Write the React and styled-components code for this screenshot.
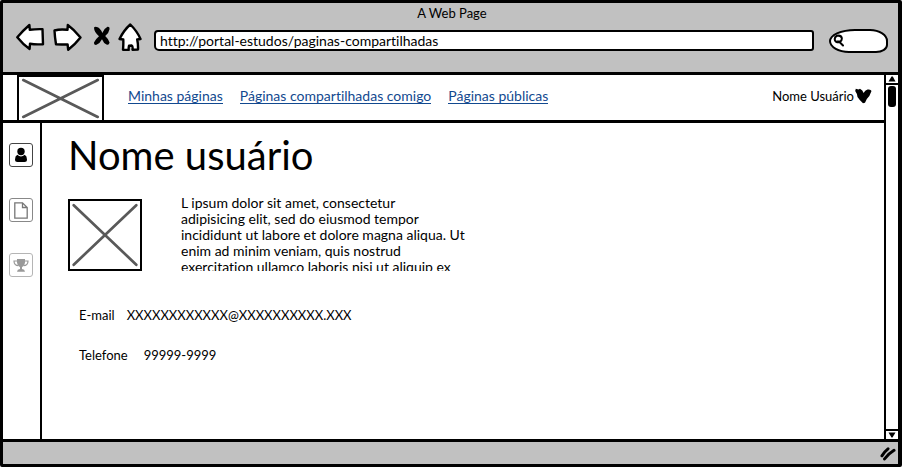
import React from "react";
import styled, { createGlobalStyle } from "styled-components";

const INK = "#000";
const CHROME = "#c1c1c1";
const LINK = "#12498f";

const GlobalStyle = createGlobalStyle`
  *, *::before, *::after { box-sizing: border-box; }
  body { margin: 0; background: #fff; color: ${INK}; font-variant-ligatures: none; }
  body, button, input { font-family: Lato, "Liberation Sans", sans-serif; font-size: 13px; line-height: 16px; }
  h1, p, dl, dd { margin: 0; }
  svg { display: block; }
`;

const BrowserFrame = styled.div`
  display: flex;
  flex-direction: column;
  min-height: 100vh;
  border: 3px solid ${INK};
  border-right-width: 4px;
  border-radius: 2px;
`;

const ChromeHeader = styled.header`
  background: ${CHROME};
  border-bottom: 3px solid ${INK};
  padding: 2px 10px 20px 13px;
`;

const WindowTitle = styled.div`
  text-align: center;
`;

const Toolbar = styled.div`
  display: flex;
  align-items: center;
  gap: 8px;
  height: 31px;
`;

const PlainButton = styled.button`
  display: flex;
  align-items: center;
  justify-content: center;
  flex: none;
  padding: 0;
  border: 0;
  background: none;
  color: inherit;
  cursor: pointer;
`;

const AddressInput = styled.input`
  flex: 1;
  min-width: 0;
  height: 21px;
  margin: 8px 7px 0 4px;
  padding: 0 4px;
  font-size: 14px;
  color: ${INK};
  background: #fff;
  border: 2px solid ${INK};
  border-radius: 4px 3px 3px 5px;
  font-variant-ligatures: none;
`;

const SearchBox = styled.label`
  display: flex;
  align-items: center;
  gap: 2px;
  width: 59px;
  height: 24px;
  margin-top: 8px;
  padding: 0 6px 0 2px;
  background: #fff;
  border: 2px solid ${INK};
  border-radius: 26px 18px 12px 20px / 12px 12px 8px 12px;
`;

const SearchInput = styled.input`
  flex: 1;
  min-width: 0;
  padding: 0;
  border: 0;
  outline: 0;
  background: transparent;
`;

const Viewport = styled.div`
  display: flex;
  flex: 1;
`;

const Page = styled.div`
  display: flex;
  flex: 1;
  flex-direction: column;
  min-width: 0;
`;

const SiteNav = styled.nav`
  display: flex;
  align-items: center;
  padding: 0 12px 0 14px;
  border-bottom: 3px solid ${INK};
`;

const ImagePlaceholder = styled.div`
  flex: none;
  width: ${(p) => p.$width}px;
  height: ${(p) => p.$height}px;
  padding: 1px;
  border: 2px solid ${INK};
  border-bottom-width: ${(p) => (p.$open ? 0 : 2)}px;
`;

const NavLinks = styled.div`
  display: flex;
  flex: 1;
  gap: 17px;
  margin: 0 0 3px 24px;
`;

const NavLink = styled.a`
  color: ${LINK};
  font-size: 14px;
  line-height: 15px;
  text-decoration: none;
  border-bottom: 1px solid ${LINK};
`;

const UserMenu = styled(PlainButton)`
  gap: 1px;
  margin-bottom: 3px;
`;

const Body = styled.div`
  display: flex;
  flex: 1;
`;

const Sidebar = styled.aside`
  display: flex;
  flex-direction: column;
  align-items: center;
  gap: 31px;
  width: 39px;
  padding: 20px 1px 20px 0;
  border-right: 2px solid ${INK};
`;

const SideButton = styled(PlainButton)`
  width: 24px;
  height: 24px;
  color: ${(p) => p.$tone};
  border: 1px solid ${(p) => p.$edge};
  border-radius: 3px;
`;

const Main = styled.main`
  flex: 1;
  min-width: 0;
  padding: 10px 26px;
`;

const Heading = styled.h1`
  font-size: 40px;
  line-height: 44px;
  font-weight: 400;
`;

const Profile = styled.section`
  display: flex;
  gap: 39px;
  margin-top: 18px;
`;

const ProfileImage = styled.div`
  padding-top: 4px;
`;

const Bio = styled.p`
  max-width: 288px;
  height: 76px;
  overflow: hidden;
  font-size: 14px;
`;

const Details = styled.dl`
  display: grid;
  gap: 24px;
  margin: 36px 0 0 11px;
`;

const Detail = styled.div`
  display: flex;
  gap: ${(p) => p.$gap}px;
`;

const Scrollbar = styled.div`
  display: flex;
  flex-direction: column;
  width: 14px;
  border-left: 2px solid ${INK};
`;

const ScrollButton = styled(PlainButton)`
  height: 10px;
  border: solid ${INK};
  border-width: ${(p) => (p.$end ? "2px 0 0" : "0 0 2px")};
`;

const Track = styled.div`
  flex: 1;
  padding: 1px 1px 1px 2px;
`;

const Thumb = styled.div`
  height: 21px;
  width: 8px;
  border-radius: 3px;
  background: ${INK};
`;

const StatusBar = styled.footer`
  display: flex;
  align-items: center;
  justify-content: flex-end;
  height: 25px;
  padding-right: 2px;
  background: ${CHROME};
  border-top: 3px solid ${INK};
`;

const outline = { fill: "#fff", stroke: INK, strokeWidth: 2.4, strokeLinejoin: "round", strokeLinecap: "round" };

const BackIcon = () => (
  <svg width="29" height="28" viewBox="0 0 29 28" {...outline}>
    <path d="M1.3 14.3 Q7 7.500 13.400 2 L13.800 6.800 Q20 6 26.500 6.200 L27 21.200 Q20 21.800 14 20.800 L13.600 26 Q7 21.500 1.300 14.300Z" />
  </svg>
);

const ForwardIcon = () => (
  <svg width="29" height="28" viewBox="0 0 29 28" {...outline}>
    <path d="M1.500 7.500 Q7 5.800 14.500 6.800 L14.800 2 Q21 6.500 27.500 14.500 Q22 21.500 15.200 26.800 L14.600 21.500 Q9 21.500 3 21.200 Q1.800 14 1.500 7.500Z" />
  </svg>
);

const StopIcon = () => (
  <svg width="20" height="28" viewBox="3 1 20 28">
    <path
      fill={INK}
      d="M7 5.500 C8 4 11 5 12.500 6.500 Q14.500 8.500 15.300 11 Q17 6.500 20.500 4.800 Q22.800 4.500 22.600 7 Q22 11 18.200 14 Q22 17.500 22.600 20.500 Q22 23.500 19.500 22.600 Q16.500 21 15 17.200 Q13.200 21 9.500 22.800 Q6.500 23.300 7 20.500 Q8.500 17 12 14.200 Q7 10 7 5.500Z"
    />
  </svg>
);

const HomeIcon = () => (
  <svg width="24" height="28" viewBox="0 0 24 28" {...outline}>
    <path d="M1.500 16 Q6 7 12.300 1.500 Q19 8 22.500 16 L19.200 16.500 Q20.200 21 20 26.500 L14.500 26.800 Q15 23 13.800 22.500 L11 22.700 Q10.500 25 10.700 27 L5 26.800 Q5.500 21 5.300 16.500Z" />
  </svg>
);

const MagnifierIcon = () => (
  <svg width="12" height="13" viewBox="0 0 12 13" fill="none" stroke={INK} strokeWidth="2" strokeLinecap="round">
    <path d="M7.500 7.500 Q3.500 9.500 2 6.500 Q1 3 4 1.800 Q8 1 8.800 4 Q9 6 7.500 7.500 L6 7.500 L10 11.500" />
  </svg>
);

const HeartIcon = () => (
  <svg width="17" height="16" viewBox="0 0 17 16">
    <path
      fill={INK}
      d="M.8 .8 L3.500 1.600 L5 .8 Q7.800 2 8.600 5 Q10 2.200 12.500 1.600 Q15.800 1 16.500 3 Q15 8 11.800 11 L10 14.800 L8 15.300 Q5 12.800 2.500 9 Q2.200 5.500 .2 3Z"
    />
  </svg>
);

const PersonIcon = () => (
  <svg width="14" height="16" viewBox="0 0 14 16" fill="currentColor">
    <circle cx="7" cy="4.500" r="3.700" />
    <path d="M3.300 7.800 Q7 11 10.700 7.800 Q13 9 13 12.500 Q13 15 10.500 15 H3.500 Q1 15 1 12.500 Q1 9 3.300 7.800Z" />
  </svg>
);

const FileIcon = () => (
  <svg width="14" height="17" viewBox="0 0 14 17" fill="none" stroke="currentColor" strokeWidth="1.300">
    <path d="M.8 .8 H8.500 L13.200 5.500 V16.200 H.8Z M8.500 .8 V5.500 H13.200" />
  </svg>
);

const TrophyIcon = () => (
  <svg width="16" height="15" viewBox="0 0 16 15">
    <path d="M4.200 3 H1 Q1 7.500 5.500 7.700 M11.800 3 H15 Q15 7.500 10.500 7.700" fill="none" stroke="currentColor" strokeWidth="1.200" />
    <path d="M4 1 H12 V4.500 Q12 7.500 9 9.200 V11 Q11.800 11.300 12 13.800 H4 Q4.200 11.300 7 11 V9.200 Q4 7.500 4 4.500Z" fill="currentColor" />
  </svg>
);

const Triangle = ({ down }) => (
  <svg width="8" height="6" viewBox="0 0 8 6" fill={INK}>
    <path d={down ? "M.5 .5 L7.500 .5 L4.500 5.500 L3.500 5.500Z" : "M3.500 .5 L4.800 .5 L7.500 5.500 L.5 5.500Z"} />
  </svg>
);

const ResizeGrip = () => (
  <svg width="17" height="15" viewBox="0 0 17 15" fill="none" stroke={INK} strokeWidth="3" strokeLinecap="round">
    <path d="M3 9.800 Q5 6 9 2.800 M5.500 13 Q9 8 15 4.300" />
  </svg>
);

const Cross = () => (
  <svg width="100%" height="100%" viewBox="0 0 100 100" preserveAspectRatio="none" stroke="#595959" strokeWidth="2.700" strokeLinecap="round">
    <path d="M4 5 L96 95 M96 5 L4 95" vectorEffect="non-scaling-stroke" />
  </svg>
);

export default function App() {
  return (
    <>
      <GlobalStyle />
      <BrowserFrame>
        <ChromeHeader>
          <WindowTitle>A Web Page</WindowTitle>
          <Toolbar>
            <PlainButton aria-label="Voltar"><BackIcon /></PlainButton>
            <PlainButton aria-label="Avançar"><ForwardIcon /></PlainButton>
            <PlainButton aria-label="Parar"><StopIcon /></PlainButton>
            <PlainButton aria-label="Início"><HomeIcon /></PlainButton>
            <AddressInput aria-label="Endereço" defaultValue="http://portal-estudos/paginas-compartilhadas" />
            <SearchBox>
              <MagnifierIcon />
              <SearchInput type="text" aria-label="Pesquisar" />
            </SearchBox>
          </Toolbar>
        </ChromeHeader>

        <Viewport>
          <Page>
            <SiteNav>
              <ImagePlaceholder $width={87} $height={45} $open><Cross /></ImagePlaceholder>
              <NavLinks>
                <NavLink href="#minhas">Minhas páginas</NavLink>
                <NavLink href="#compartilhadas">Páginas compartilhadas comigo</NavLink>
                <NavLink href="#publicas">Páginas públicas</NavLink>
              </NavLinks>
              <UserMenu>Nome Usuário <HeartIcon /></UserMenu>
            </SiteNav>

            <Body>
              <Sidebar>
                <SideButton $tone="#000" $edge="#444" aria-label="Perfil"><PersonIcon /></SideButton>
                <SideButton $tone="#777" $edge="#888" aria-label="Páginas"><FileIcon /></SideButton>
                <SideButton $tone="#999" $edge="#b5b5b5" aria-label="Conquistas"><TrophyIcon /></SideButton>
              </Sidebar>
              <Main>
                <Heading>Nome usuário</Heading>
                <Profile>
                  <ProfileImage>
                    <ImagePlaceholder $width={74} $height={72}><Cross /></ImagePlaceholder>
                  </ProfileImage>
                  <Bio>
                    L ipsum dolor sit amet, consectetur
                    <br />
                    adipisicing elit, sed do eiusmod tempor incididunt ut labore et dolore magna aliqua. Ut
                    enim ad minim veniam, quis nostrud exercitation ullamco laboris nisi ut aliquip ex
                  </Bio>
                </Profile>
                <Details>
                  <Detail $gap={12}><dt>E-mail</dt><dd>XXXXXXXXXXXX@XXXXXXXXXX.XXX</dd></Detail>
                  <Detail $gap={16}><dt>Telefone</dt><dd>99999-9999</dd></Detail>
                </Details>
              </Main>
            </Body>
          </Page>

          <Scrollbar>
            <ScrollButton aria-label="Rolar para cima"><Triangle /></ScrollButton>
            <Track><Thumb /></Track>
            <ScrollButton $end aria-label="Rolar para baixo"><Triangle down /></ScrollButton>
          </Scrollbar>
        </Viewport>

        <StatusBar><ResizeGrip /></StatusBar>
      </BrowserFrame>
    </>
  );
}
